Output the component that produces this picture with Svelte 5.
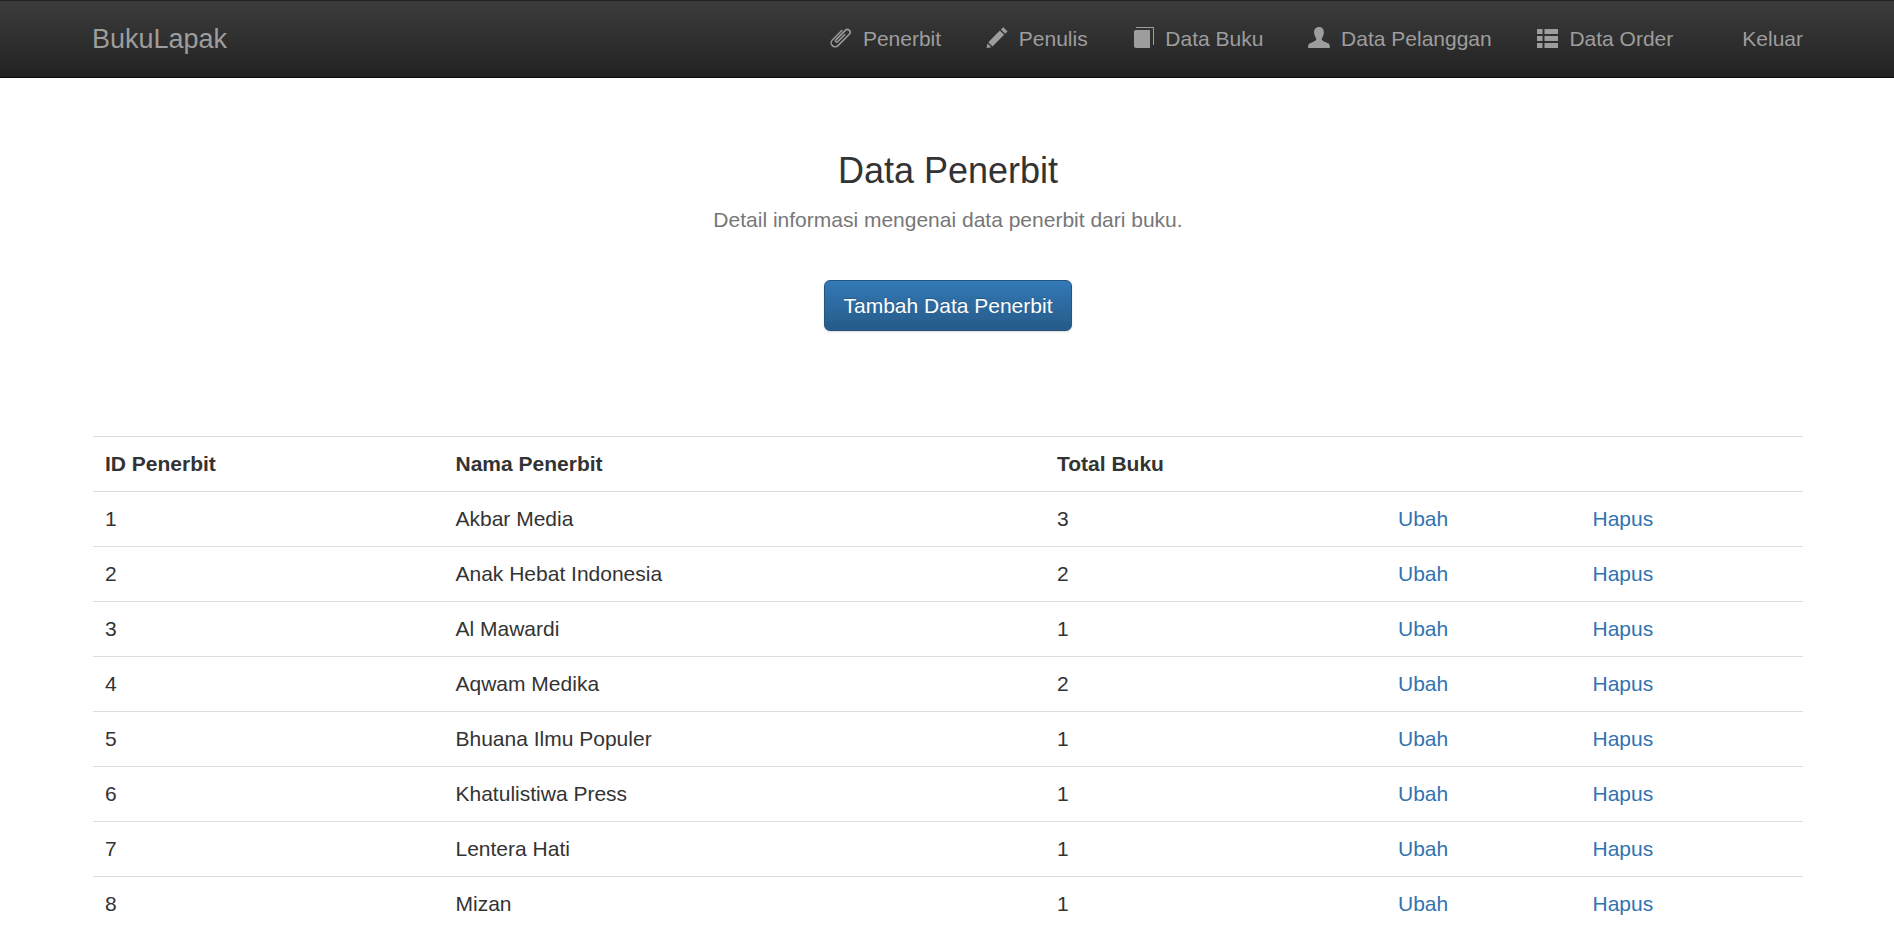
<script>
	const menu = [
		{ label: 'Penerbit', icon: 'paperclip' },
		{ label: 'Penulis', icon: 'pencil' },
		{ label: 'Data Buku', icon: 'book' },
		{ label: 'Data Pelanggan', icon: 'user' },
		{ label: 'Data Order', icon: 'list' }
	];

	const rows = [
		[1, 'Akbar Media', 3],
		[2, 'Anak Hebat Indonesia', 2],
		[3, 'Al Mawardi', 1],
		[4, 'Aqwam Medika', 2],
		[5, 'Bhuana Ilmu Populer', 1],
		[6, 'Khatulistiwa Press', 1],
		[7, 'Lentera Hati', 1],
		[8, 'Mizan', 1]
	];
</script>

<nav class="navbar">
	<a class="brand" href="#top">BukuLapak</a>
	<ul class="menu">
		{#each menu as item}
			<li>
				<a href="#top">
					<svg viewBox="0 0 21 21" width="21" height="21" aria-hidden="true">
						{#if item.icon === 'paperclip'}
							<path class="line" transform="rotate(45 10.5 10.5)" d="M6.5 4 V18 a4 4 0 0 0 8 0 V2 a2.8 2.8 0 0 0 -5.6 0 V15.5 a1.3 1.3 0 0 0 2.6 0 V5" />
						{:else if item.icon === 'pencil'}
							<path d="M17.3 0.2 L21.5 4.4 L19.1 6.8 L14.9 2.6 Z M13.9 3.6 L18.1 7.8 L6.5 19.4 L2.3 15.2 Z M1.5 16.4 L5.3 20.2 L0.5 21 Z" />
						{:else if item.icon === 'book'}
							<path d="M3 3 H17 V21 H3 Q1 21 1 19 V5 Q1 3 3 3 Z" />
							<path d="M3 0 H21 V18 H20 V1 H3 Z" />
						{:else if item.icon === 'user'}
							<path d="M11 0 C14.5 0 16.1 2.6 15.9 5.6 C15.8 8.2 14.7 10.4 13.7 11.6 C13.5 12.8 14.1 13.6 15.5 14.2 L20.5 16.4 C21.5 16.9 21.9 18 21.9 21 H0.1 C0.1 18 0.5 16.9 1.5 16.4 L6.5 14.2 C7.9 13.6 8.5 12.8 8.3 11.6 C7.3 10.4 6.2 8.2 6.1 5.6 C5.9 2.6 7.5 0 11 0 Z" />
						{:else}
							<path d="M0 2 H5.5 V7 H0 Z M7.5 2 H21 V7 H7.5 Z M0 9 H5.5 V14 H0 Z M7.5 9 H21 V14 H7.5 Z M0 16 H5.5 V21 H0 Z M7.5 16 H21 V21 H7.5 Z" />
						{/if}
					</svg>
					<span>{item.label}</span>
				</a>
			</li>
		{/each}
		<li class="logout"><a href="#top"><span>Keluar</span></a></li>
	</ul>
</nav>

<main class="container">
	<header class="heading">
		<h3>Data Penerbit</h3>
		<p>Detail informasi mengenai data penerbit dari buku.</p>
		<a class="btn" href="#top">Tambah Data Penerbit</a>
	</header>

	<table>
		<colgroup>
			<col class="c1" />
			<col class="c2" />
			<col class="c3" />
			<col class="c4" />
			<col class="c5" />
		</colgroup>
		<thead>
			<tr>
				<th>ID Penerbit</th>
				<th>Nama Penerbit</th>
				<th>Total Buku</th>
				<th></th>
				<th></th>
			</tr>
		</thead>
		<tbody>
			{#each rows as row}
				<tr>
					<td>{row[0]}</td>
					<td>{row[1]}</td>
					<td>{row[2]}</td>
					<td><a href="#top">Ubah</a></td>
					<td><a href="#top">Hapus</a></td>
				</tr>
			{/each}
		</tbody>
	</table>
</main>

<style>
	:global(html), :global(body) {
		height: 100%;
		overflow: hidden;
	}

	:global(body) {
		font-family: "Liberation Sans", Arial, sans-serif;
		font-size: 21px;
		line-height: 30px;
		color: #333;
		background: #fff;
	}

	a {
		text-decoration: none;
	}

	.navbar {
		display: flex;
		justify-content: space-between;
		align-items: center;
		box-sizing: border-box;
		height: 78px;
		padding: 0 91px 0 93px;
		background-image: linear-gradient(to bottom, #3c3c3c 0, #222 100%);
		border-top: 1px solid #222;
		border-bottom: 1px solid #080808;
	}

	.brand {
		margin-left: -1px;
		font-size: 27px;
		color: #9d9d9d;
	}

	.menu {
		display: flex;
		margin: 0;
		padding: 0;
		list-style: none;
	}

	.menu li + li {
		margin-left: 45px;
	}

	.menu li.logout {
		margin-left: 69px;
	}

	.menu a {
		display: flex;
		align-items: center;
		gap: 11.7px;
		color: #9d9d9d;
	}

	.menu svg {
		display: block;
		fill: #9d9d9d;
		margin-top: -4px;
		overflow: visible;
	}

	.line {
		fill: none;
		stroke: #9d9d9d;
		stroke-width: 1.5;
	}

	.container {
		padding: 0 91px 0 93px;
	}

	.heading {
		display: flex;
		flex-direction: column;
		align-items: center;
		padding-top: 73px;
		margin-bottom: 105px;
	}

	h3 {
		margin: 0;
		font-size: 36px;
		font-weight: 500;
		line-height: 40px;
	}

	p {
		margin: 14px 0 45px;
		color: #777;
	}

	.btn {
		box-sizing: border-box;
		height: 51px;
		padding: 10px 18.2px 8px;
		color: #fff;
		background-image: linear-gradient(to bottom, #337ab7 0, #265a88 100%);
		border: 1px solid #245580;
		border-radius: 6px;
		box-shadow: 0 1px 2px rgba(0, 0, 0, 0.15);
		text-shadow: 0 -1px 0 rgba(0, 0, 0, 0.2);
		line-height: 30px;
	}

	table {
		width: 100%;
		table-layout: fixed;
		border-collapse: collapse;
	}

	.c1 { width: 350.5px; }
	.c2 { width: 601.5px; }
	.c3 { width: 341px; }
	.c4 { width: 194.5px; }

	th, td {
		padding: 12px;
		text-align: left;
		line-height: 30px;
		border-top: 1px solid #ddd;
	}

	th {
		font-weight: 700;
	}

	td a {
		color: #3273b0;
	}
</style>
